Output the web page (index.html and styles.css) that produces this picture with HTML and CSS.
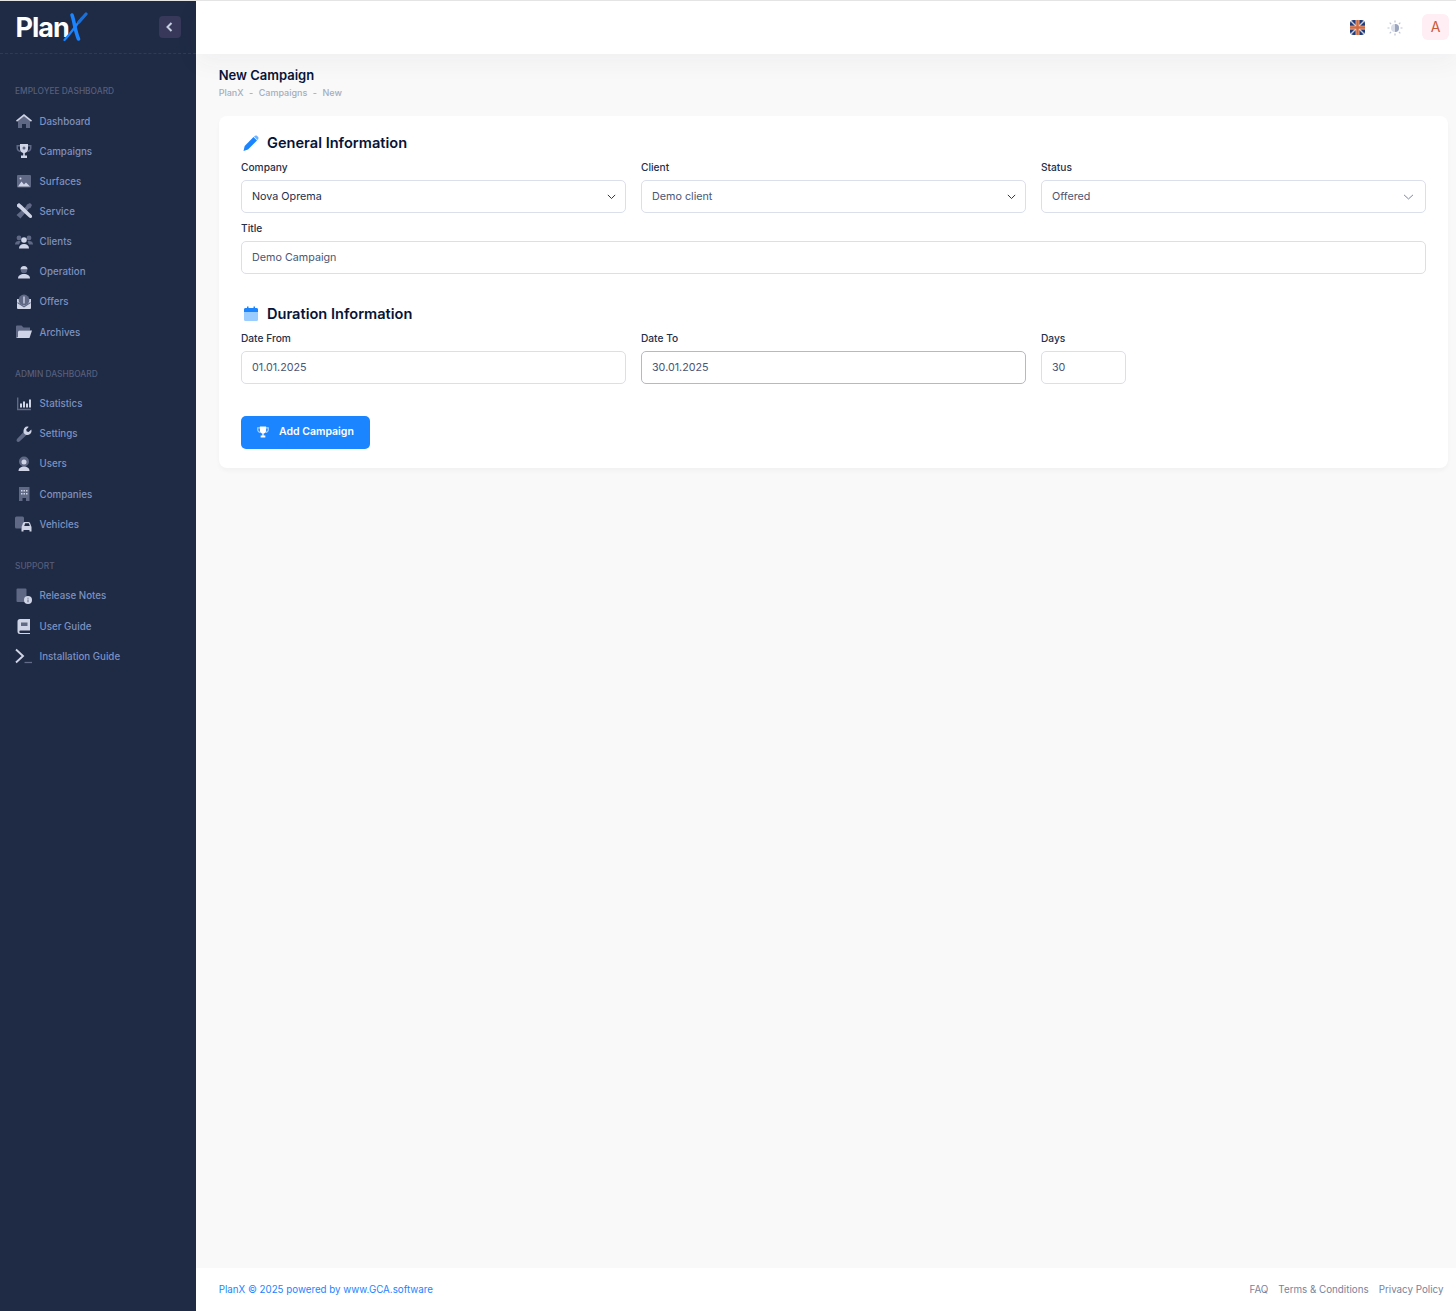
FILE: index.html
```html
<!DOCTYPE html>
<html lang="en">
<head>
  <meta charset="UTF-8" />
  <title>New Campaign - PlanX</title>
  <link rel="stylesheet" href="styles.css">
</head>
<body>

  <!-- Sidebar -->
  <aside class="sidebar">
    <div class="sidebar-logo">
      <div class="logo">
        <span class="logo-text">Plan</span>
        <svg class="logo-mark" width="26" height="30" viewBox="0 0 26 30" fill="none">
          <path d="M9 3c2.500 7 3 16 6.500 24" stroke="#1b84ff" stroke-width="3.600" stroke-linecap="round"/>
          <path d="M1.500 28C8 21 14 12 19 6" stroke="#1b84ff" stroke-width="2.200" stroke-linecap="round"/>
          <path d="M16 10l7-8" stroke="#1b6fd6" stroke-width="3.200" stroke-linecap="round"/>
        </svg>
      </div>
      <button class="sidebar-toggle">
        <svg width="10" height="10" viewBox="0 0 10 10" fill="none"><path d="M6.500 1 2.500 5l4 4" stroke="#c5cde0" stroke-width="2"/></svg>
      </button>
    </div>

    <div class="menu-label first">Employee Dashboard</div>
    <a class="menu-item">
      <svg class="menu-icon" viewBox="0 0 18 18"><path class="dim" d="M3 8.500 9 4l6 4.500V16h-4v-4H7v4H3z"/><path class="lit" d="M9 2 1 8.500l1 1.200L9 4.200l7 5.500 1-1.200z"/></svg>
      Dashboard
    </a>
    <a class="menu-item">
      <svg class="menu-icon" viewBox="0 0 18 18"><path class="dim" d="M1.500 3H16.500V6c0 2.500-2 4-4 4.200l.3-1.700C14 8.200 15 7.300 15 6V4.500H3V6c0 1.300 1 2.200 2.200 2.500l.3 1.700c-2-.2-4-1.700-4-4.200z"/><path class="lit" d="M5 2h8v5c0 2.300-1.500 3.700-3.200 4v2.500H12V16H6v-2.500h2.200V11C6.500 10.700 5 9.300 5 7z"/><circle class="dim" cx="9" cy="6" r="1.500"/></svg>
      Campaigns
    </a>
    <a class="menu-item">
      <svg class="menu-icon" viewBox="0 0 18 18"><rect class="dim" x="2" y="3" width="14" height="12.500" rx="1"/><path class="lit" d="M3 14.500l3.500-5 2.500 3 2-2 4 4z"/><circle class="lit" cx="5.500" cy="6.500" r="1"/></svg>
      Surfaces
    </a>
    <a class="menu-item">
      <svg class="menu-icon" viewBox="0 0 18 18"><path class="dim" d="M12 2.500 15 1l2 2-1.500 3L14 6.500 5.500 16.500 1.500 13 11 4.500z"/><path class="lit" d="M2 2.500 4 1 7 3.500 16.500 13c.8.800.800 1.800.200 2.500s-1.800.800-2.500.100L4.500 6.500 2 4.500z"/></svg>
      Service
    </a>
    <a class="menu-item">
      <svg class="menu-icon" viewBox="0 0 18 18"><circle class="dim" cx="4" cy="5" r="2.400"/><circle class="dim" cx="14" cy="5" r="2.400"/><path class="dim" d="M0 11.500C0 9 1.500 8 4 8c1 0 1.500.5 1.500.5L4 11.500zM18 11.500C18 9 16.500 8 14 8c-1 0-1.500.5-1.500.5l1.500 3z"/><circle class="lit" cx="9" cy="7" r="2.800"/><path class="lit" d="M4 15.500c0-3 2-4.500 5-4.500s5 1.500 5 4.500z"/></svg>
      Clients
    </a>
    <a class="menu-item">
      <svg class="menu-icon" viewBox="0 0 18 18"><path class="lit" d="M5.500 6.500a3.500 3.500 0 0 1 7 0z"/><path class="dim" d="M5.800 7h6.400a3.200 3.200 0 0 1-6.400 0z"/><path class="lit" d="M3 15.500c0-3 2.500-4.500 6-4.500s6 1.500 6 4.500z"/></svg>
      Operation
    </a>
    <a class="menu-item">
      <svg class="menu-icon" viewBox="0 0 18 18"><path class="lit" d="M2 6h14v9a1 1 0 0 1-1 1H3a1 1 0 0 1-1-1z"/><circle class="dim" cx="9" cy="7" r="5.400"/><path class="lit" d="M8.300 3.500h1.400v7H8.300z"/><path class="dim" d="M2.500 9 9 13l6.500-4v1.300L9 14.500l-6.500-4.200z"/></svg>
      Offers
    </a>
    <a class="menu-item">
      <svg class="menu-icon" viewBox="0 0 18 18"><path class="dim" d="M1 3.500a1 1 0 0 1 1-1h4.500l2 2H15v3H1z"/><path class="lit" d="M1 15 3.500 7.500H17L14.500 15z"/><path class="dim" d="M1 6h2v8l-2 1z"/></svg>
      Archives
    </a>

    <div class="menu-label">Admin Dashboard</div>
    <a class="menu-item">
      <svg class="menu-icon" viewBox="0 0 18 18"><path class="dim" d="M2 2.500h1.400v11.200H16v1.500H2z"/><path class="lit" d="M5 8.500h2v4H5zM8 6.500h2v6H8zM11 8.500h2v4h-2zM14 4.500h2v8h-2z"/></svg>
      Statistics
    </a>
    <a class="menu-item">
      <svg class="menu-icon" viewBox="0 0 18 18"><path class="dim" d="M9 6.500 12 9.500 4.500 16.500c-.8.600-1.900.6-2.500 0s-.6-1.700 0-2.500z"/><path class="lit" d="M12 1.500c1 0 1.800.3 1.800.3L11.200 4.500l.5 2 2 .5L16.300 4.500s.3.800.2 2c-.3 2.200-2.500 3.800-4.800 3.500-2-.3-3.500-2.200-3.200-4.300C8.800 3.400 10.200 1.500 12 1.500z"/></svg>
      Settings
    </a>
    <a class="menu-item">
      <svg class="menu-icon" viewBox="0 0 18 18"><circle class="dim" cx="9" cy="6.500" r="5"/><circle class="lit" cx="9" cy="7" r="2.500"/><path class="lit" d="M3.500 16c0-3 2.500-4.500 5.500-4.500s5.500 1.500 5.500 4.500z"/></svg>
      Users
    </a>
    <a class="menu-item">
      <svg class="menu-icon" viewBox="0 0 18 18"><path class="dim" d="M4 2h10.500v14H11v-3H7.500v3H4z"/><path class="lit" d="M6 5h1.500v1.500H6zM8.500 5H10v1.500H8.500zM11 5h1.500v1.500H11zM6 8h1.500v1.500H6zM8.500 8H10v1.500H8.500zM11 8h1.500v1.500H11z"/></svg>
      Companies
    </a>
    <a class="menu-item">
      <svg class="menu-icon" viewBox="0 0 18 18"><path class="dim" d="M0 3a1.500 1.500 0 0 1 1.500-1.500h6A1.500 1.500 0 0 1 9 3v3.500L6 13.500H1.500A1.500 1.500 0 0 1 0 12z"/><path class="lit" d="M6.500 16.500v-4.500l1.500-4c.3-.6.800-1 1.500-1h4c.7 0 1.200.4 1.500 1l1.500 4v4.500h-2v-1.500H8.500v1.500zM9.200 11h5.600l-1-2.700H10.200z"/></svg>
      Vehicles
    </a>

    <div class="menu-label">Support</div>
    <a class="menu-item">
      <svg class="menu-icon" viewBox="0 0 18 18"><path class="dim" d="M2.500 1.500h8a1 1 0 0 1 1 1v12.500h-9a1 1 0 0 1-1-1v-11.500a1 1 0 0 1 1-1z"/><circle class="lit" cx="13" cy="13" r="4"/><path class="dim" d="M12.500 12.500h1v2.800h-1zM12.500 10.800h1v1h-1z"/></svg>
      Release Notes
    </a>
    <a class="menu-item">
      <svg class="menu-icon" viewBox="0 0 18 18"><path class="lit" d="M5 2h10v11.500H5.500a1.200 1.200 0 0 0 0 2.400H15V17H5a2.500 2.500 0 0 1-2.500-2.500v-10A2.500 2.500 0 0 1 5 2z"/><path class="dim" d="M6 5.500h6.500v3.500H6z"/></svg>
      User Guide
    </a>
    <a class="menu-item">
      <svg class="menu-icon" viewBox="0 0 18 18" fill="none"><path d="M1 2.500 8 9l-7 6.500" stroke="#cfd5e6" stroke-width="1.900"/><path d="M9.500 15.500H17" stroke="#636d8a" stroke-width="1.300"/></svg>
      Installation Guide
    </a>
  </aside>

  <!-- Main column -->
  <div class="main">
    <header class="topbar">
      <svg class="flag" width="15" height="15" viewBox="0 0 16 16">
        <rect width="16" height="16" rx="4" fill="#1f3a78"/>
        <path d="M1 1 15 15M15 1 1 15" stroke="#c9ccd8" stroke-width="1.500"/>
        <path d="M8 0v16M0 8h16" stroke="#e9d6cc" stroke-width="4"/>
        <path d="M8 0v16M0 8h16" stroke="#d2693f" stroke-width="2.600"/>
      </svg>
      <svg class="theme-icon" width="16" height="16" viewBox="0 0 16 16">
        <circle cx="8" cy="8" r="4" fill="#d9deea"/>
        <path d="M8 4a4 4 0 0 1 0 8z" fill="#9aa5bd"/>
        <path d="M8 .5v2M8 13.500v2M.5 8h2M13.500 8h2M2.700 2.700l1.400 1.400M11.900 11.900l1.400 1.400M2.700 13.300l1.400-1.400M11.900 4.100l1.400-1.400" stroke="#bcc4d5" stroke-width="1.200"/>
      </svg>
      <div class="avatar">A</div>
    </header>

    <main class="content">
      <h1 class="page-title">New Campaign</h1>
      <div class="breadcrumb">
        <span>PlanX</span><span>-</span><span>Campaigns</span><span>-</span><span>New</span>
      </div>

      <form class="card">
        <h2 class="section-title">
          <svg width="18" height="18" viewBox="0 0 18 18"><path fill="#1b84ff" d="M11.500 3 15 6.500 6 15.500 1.500 17l1.200-5z"/><path fill="#6cb2ff" d="M12.500 2c.7-.7 1.900-.7 2.600-.1l.9.900c.7.700.7 1.900 0 2.600l-.6.600L12 2.500z"/></svg>
          General Information
        </h2>
        <div class="form-row">
          <div class="field">
            <label>Company</label>
            <select class="dark"><option>Nova Oprema</option></select>
          </div>
          <div class="field">
            <label>Client</label>
            <select class="mid"><option>Demo client</option></select>
          </div>
          <div class="field">
            <label>Status</label>
            <select class="status"><option>Offered</option></select>
          </div>
        </div>
        <div class="field field-title">
          <label>Title</label>
          <input type="text" value="Demo Campaign">
        </div>

        <h2 class="section-title second">
          <svg width="18" height="18" viewBox="0 0 18 18"><rect fill="#9accff" x="2" y="3" width="14" height="13" rx="1.500"/><path fill="#1b84ff" d="M3.500 3H5V1.500h1.500V3h5V1.500H13V3h1.500A1.500 1.500 0 0 1 16 4.500V7H2V4.500A1.500 1.500 0 0 1 3.500 3z"/></svg>
          Duration Information
        </h2>
        <div class="form-row">
          <div class="field">
            <label>Date From</label>
            <input type="text" value="01.01.2025">
          </div>
          <div class="field">
            <label>Date To</label>
            <input type="text" class="focused" value="30.01.2025">
          </div>
          <div class="field">
            <label>Days</label>
            <input type="text" class="days" value="30">
          </div>
        </div>

        <button type="button" class="submit-btn">
          <svg width="14" height="14" viewBox="0 0 18 18"><path fill="#a9d2ff" d="M1.500 3H16.500V6c0 2.500-2 4-4 4.200l.3-1.700C14 8.200 15 7.300 15 6V4.500H3V6c0 1.300 1 2.200 2.200 2.500l.3 1.700c-2-.2-4-1.700-4-4.200z"/><path fill="#fff" d="M5 2h8v5c0 2.300-1.500 3.700-3.200 4v2.500H12V16H6v-2.500h2.200V11C6.500 10.700 5 9.300 5 7z"/></svg>
          Add Campaign
        </button>
      </form>
    </main>

    <footer class="footer">
      <div class="copyright">PlanX © 2025 powered by www.GCA.software</div>
      <nav class="footer-links">
        <a>FAQ</a>
        <a>Terms &amp; Conditions</a>
        <a>Privacy Policy</a>
      </nav>
    </footer>
  </div>

</body>
</html>
```

FILE: styles.css
```css
* {
  box-sizing: border-box;
}

body {
  font-family: Inter, "Liberation Sans", sans-serif;
  background-color: #f9f9f9;
  color: #071437;
  margin: 0;
  height: 1311px;
  display: flex;
  border-top: 1px solid #e4e4e4;
  overflow: hidden;
}

/* Sidebar */
.sidebar {
  width: 196px;
  flex-shrink: 0;
  background-color: #1f2a44;
}

.sidebar-logo {
  height: 53px;
  padding: 0 15px 0 15.500px;
  display: flex;
  align-items: center;
  justify-content: space-between;
  border-bottom: 1px dashed #2a3a63;
}

.logo {
  display: flex;
  align-items: center;
  margin-top: 1px;
}

.logo-text {
  color: white;
  font-size: 27px;
  font-weight: 700;
  letter-spacing: -1px;
  line-height: 32px;
}

.logo-mark {
  margin-left: -6px;
  margin-top: -2px;
}

.sidebar-toggle {
  width: 22px;
  height: 22px;
  padding: 0;
  margin-top: -1px;
  display: flex;
  align-items: center;
  justify-content: center;
  background-color: #38395a;
  border: none;
  border-radius: 4px;
}

.menu-label {
  margin: 21px 0 8.500px 15px;
  font-size: 8.400px;
  font-weight: 500;
  line-height: 12px;
  text-transform: uppercase;
  color: #565f7d;
}

.menu-label.first {
  margin-top: 31px;
  margin-bottom: 9px;
}

.menu-item {
  height: 30.150px;
  padding-left: 15px;
  display: flex;
  align-items: center;
  gap: 6.500px;
  font-size: 9.750px;
  font-weight: 500;
  color: #7d92c0;
}

.menu-icon {
  width: 18px;
  height: 18px;
  flex-shrink: 0;
}

.menu-icon .lit {
  fill: #cfd5e6;
}

.menu-icon .dim {
  fill: #5f6985;
}

/* Main column */
.main {
  flex: 1;
  min-width: 0;
  display: flex;
  flex-direction: column;
}

.topbar {
  height: 53px;
  flex-shrink: 0;
  padding-right: 7px;
  display: flex;
  align-items: center;
  justify-content: flex-end;
  background-color: white;
  box-shadow: 0 8px 24px rgba(82, 63, 105, 0.05);
}

.flag {
  margin-right: 22px;
}

.theme-icon {
  margin-right: 19px;
}

.avatar {
  width: 27px;
  height: 26px;
  margin-top: -1px;
  padding-bottom: 2px;
  display: flex;
  align-items: center;
  justify-content: center;
  background-color: #ffeef3;
  border-radius: 6px;
  font-size: 14px;
  color: #c9593a;
}

.content {
  flex: 1;
  padding: 13px 8px 0 22.700px;
}

.page-title {
  margin: 0;
  font-size: 13px;
  font-weight: 600;
  line-height: 16px;
}

.breadcrumb {
  margin-top: 4px;
  display: flex;
  gap: 5.500px;
  font-size: 9px;
  font-weight: 500;
  line-height: 11px;
  color: #a4adbd;
}

/* Form card */
.card {
  margin-top: 18px;
  height: 352px;
  padding: 16px 22.300px 0;
  background-color: white;
  border-radius: 8px;
  box-shadow: 0 3px 4px rgba(0, 0, 0, 0.03);
}

.section-title {
  margin: 0 0 7px;
  display: flex;
  align-items: center;
  gap: 7px;
  padding-left: 1px;
  font-size: 14.600px;
  font-weight: 600;
  line-height: 22px;
}

.section-title.second {
  margin-top: 29px;
}

.form-row {
  display: grid;
  grid-template-columns: repeat(3, 385px);
  gap: 15px;
}

.field label {
  display: block;
  margin-bottom: 7px;
  font-size: 10.200px;
  font-weight: 500;
  line-height: 12px;
  color: #252f4a;
}

.field-title {
  margin-top: 9px;
}

.field input,
.field select {
  display: block;
  width: 100%;
  height: 33px;
  padding: 0 10px;
  font-family: inherit;
  font-size: 10.750px;
  color: #4b5675;
  background-color: white;
  border: 1px solid #dbdfe9;
  border-radius: 5px;
  outline: none;
}

.field select {
  appearance: none;
  background-image: url("data:image/svg+xml,%3csvg xmlns='http://www.w3.org/2000/svg' viewBox='0 0 16 16'%3e%3cpath fill='none' stroke='%23252f4a' stroke-width='1.200' d='M3.500 6l4.500 4.500L12.500 6'/%3e%3c/svg%3e");
  background-repeat: no-repeat;
  background-position: right 6.500px center;
  background-size: 13px 13px;
}

.field select.dark {
  color: #252f4a;
}

.field select.status {
  background-position: right 10px center;
  background-image: url("data:image/svg+xml,%3csvg xmlns='http://www.w3.org/2000/svg' viewBox='0 0 16 16'%3e%3cpath fill='none' stroke='%2378829d' stroke-width='1.200' d='M2.500 6l5.500 5 5.500-5'/%3e%3c/svg%3e");
}

.field input.focused {
  border-color: #b5b9c4;
}

.field input.days {
  width: 85px;
}

.submit-btn {
  margin-top: 32px;
  width: 129px;
  height: 33px;
  display: flex;
  align-items: center;
  gap: 9px;
  padding: 0 0 2px 15px;
  font-family: inherit;
  font-size: 10.500px;
  font-weight: 600;
  color: white;
  background-color: #1b84ff;
  border: none;
  border-radius: 5px;
}

/* Footer */
.footer {
  height: 43px;
  flex-shrink: 0;
  padding: 0 12.500px 0 22.700px;
  display: flex;
  align-items: center;
  justify-content: space-between;
  background-color: white;
  font-size: 9.800px;
}

.copyright {
  color: #1b84ff;
  font-size: 9.750px;
}

.footer-links {
  display: flex;
  gap: 10px;
  color: #78829d;
}
```
